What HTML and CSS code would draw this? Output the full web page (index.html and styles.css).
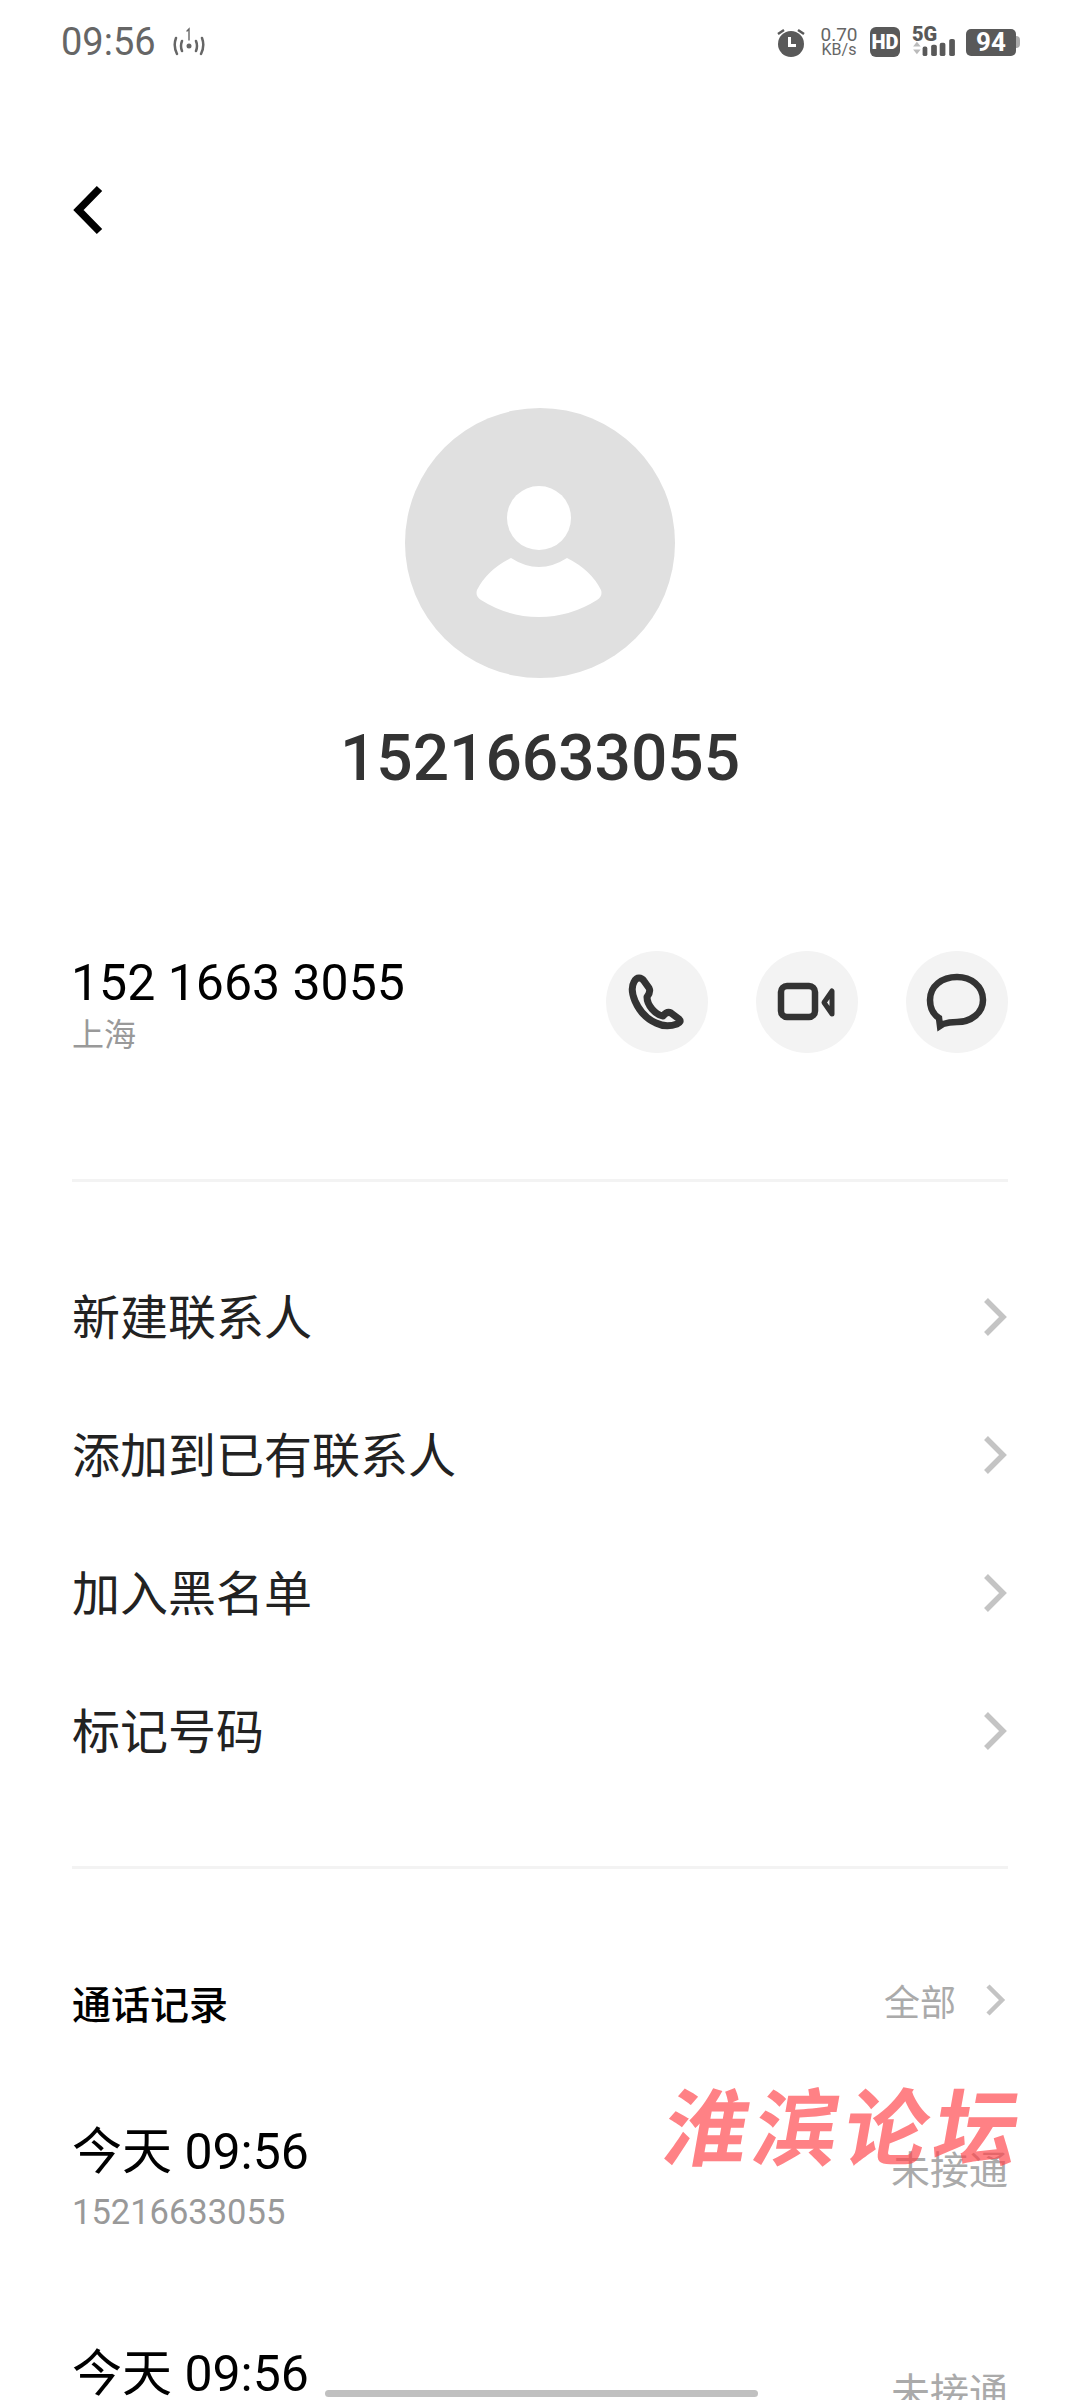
FILE: index.html
```html
<!DOCTYPE html>
<html lang="zh-CN">
<head>
    <meta charset="UTF-8">
    <meta name="viewport" content="width=device-width, initial-scale=1.0">
    <title>通话详情</title>
    <link rel="stylesheet" href="styles.css">
</head>
<body>
    <div class="statusbar">
        <div class="status-left">
            <span class="time">09:56</span>
            <svg class="hotspot" width="32" height="30" viewBox="0 0 32 30" fill="none" stroke="#666" stroke-width="2.500" stroke-linecap="round">
                <path d="M3 11q-3 8 1 16M9 14q-2 5 0 10M29 11q3 8-1 16M23 14q2 5 0 10"/>
                <circle cx="16" cy="19" r="2.500" fill="#666" stroke="none"/>
                <path d="M14 4l2-2v11" stroke-width="1.400"/>
            </svg>
        </div>
        <div class="status-right">
            <svg class="alarm" width="30" height="30" viewBox="0 0 30 30">
                <circle cx="15" cy="17" r="13" fill="#595959"/>
                <path d="M2 7l6-4M28 7l-6-4" stroke="#595959" stroke-width="2.500" fill="none"/>
                <path d="M13.500 10v8.500h6.500" stroke="#fff" stroke-width="3" fill="none"/>
            </svg>
            <div class="speed"><span>0.70</span><span>KB/s</span></div>
            <div class="hd">HD</div>
            <div class="net">
                <span class="net-label">5G</span>
                <svg class="signal" width="44" height="20" viewBox="0 0 44 20" fill="#595959">
                    <path d="M0 9l4-5 4 5zM0 12h8l-4 5z" fill="#bbb"/>
                    <rect x="10" y="9" width="5" height="10" rx="2"/>
                    <rect x="19" y="7" width="6" height="12" rx="2"/>
                    <rect x="28" y="5" width="6" height="14" rx="2"/>
                    <rect x="38" y="1" width="6" height="18" rx="2"/>
                </svg>
            </div>
            <div class="battery"><span class="battery-body">94</span><span class="battery-cap"></span></div>
        </div>
    </div>

    <div class="topbar">
        <svg width="34" height="50" viewBox="0 0 34 50" fill="none" stroke="#000" stroke-width="7.500">
            <path d="M30.500 3.500L9.500 25 30.500 46.500"/>
        </svg>
    </div>

    <div class="profile">
        <div class="avatar">
            <svg width="270" height="270" viewBox="0 0 270 270" fill="#fff">
                <circle cx="134" cy="110" r="32"/>
                <path d="M106 150Q134 168 162 150Q186 162 196 182Q198 188 192 192Q165 209 134 209Q103 209 76 192Q70 188 72 182Q82 162 106 150Z"/>
            </svg>
        </div>
        <div class="name">15216633055</div>
    </div>

    <div class="contact">
        <div class="contact-info">
            <div class="phone">152 1663 3055</div>
            <div class="region">上海</div>
        </div>
        <div class="actions">
            <div class="action">
                <svg width="102" height="102" viewBox="0 0 102 102" fill="none" stroke="#333" stroke-width="7" stroke-linejoin="round">
                    <path d="M33 27Q36 27 38 30L43 37Q45 41 41 46Q41 52 46 58Q51 64 57 65Q61 60 65 62L73 68Q76 71 71 73Q60 77 50 72Q36 66 29 50Q24 38 28 31Q30 27 33 27Z"/>
                </svg>
            </div>
            <div class="action">
                <svg width="102" height="102" viewBox="0 0 102 102" fill="none" stroke="#333" stroke-width="6.500" stroke-linejoin="round">
                    <rect x="25" y="35" width="34" height="31" rx="6"/>
                    <path d="M76 40v23l-8-11.500z" stroke-width="5"/>
                </svg>
            </div>
            <div class="action">
                <svg width="102" height="102" viewBox="0 0 102 102" fill="none" stroke="#333" stroke-width="6.500">
                    <path d="M33 67C25 62 24 55 24 49C24 35 36 26 51 26C65 26 77 35 77 49C77 62 65 71 51 71C47 71 43 71 37 73L34 75Z"/>
                </svg>
            </div>
        </div>
    </div>

    <ul class="menu">
        <li class="menu-item">新建联系人<svg class="arrow" width="26" height="40" viewBox="0 0 26 40" fill="none" stroke="#c4c4c4" stroke-width="5.500"><path d="M4 3l17 17L4 37"/></svg></li>
        <li class="menu-item">添加到已有联系人<svg class="arrow" width="26" height="40" viewBox="0 0 26 40" fill="none" stroke="#c4c4c4" stroke-width="5.500"><path d="M4 3l17 17L4 37"/></svg></li>
        <li class="menu-item">加入黑名单<svg class="arrow" width="26" height="40" viewBox="0 0 26 40" fill="none" stroke="#c4c4c4" stroke-width="5.500"><path d="M4 3l17 17L4 37"/></svg></li>
        <li class="menu-item">标记号码<svg class="arrow" width="26" height="40" viewBox="0 0 26 40" fill="none" stroke="#c4c4c4" stroke-width="5.500"><path d="M4 3l17 17L4 37"/></svg></li>
    </ul>

    <div class="history">
        <div class="history-head">
            <span class="history-title">通话记录</span>
            <span class="history-all">全部<svg width="24" height="34" viewBox="0 0 24 34" fill="none" stroke="#c4c4c4" stroke-width="4.500"><path d="M4 3l14 14L4 31"/></svg></span>
        </div>
        <div class="call">
            <div>
                <div class="call-time">今天 09:56</div>
                <div class="call-num">15216633055</div>
            </div>
            <span class="call-state">未接通</span>
        </div>
        <div class="call">
            <div>
                <div class="call-time">今天 09:56</div>
            </div>
            <span class="call-state">未接通</span>
        </div>
    </div>

    <div class="watermark">淮滨论坛</div>
    <div class="home-bar"></div>
</body>
</html>
```

FILE: styles.css
```css
*{
    padding: 0;
    margin: 0;
    box-sizing: border-box;
}
ul li{
    list-style: none;
}
body{
    position: relative;
    width: 1080px;
    height: 2400px;
    overflow: hidden;
    background-color: #fff;
    color: #000;
    font-family: Roboto, "Noto Sans CJK SC", sans-serif;
}

/* status bar */
.statusbar{
    display: flex;
    justify-content: space-between;
    align-items: center;
    height: 84px;
    padding: 0 60px 0 61px;
    color: #666;
}
.status-left{
    display: flex;
    align-items: center;
    gap: 17px;
}
.time{
    font-size: 38px;
    line-height: 44px;
}
.status-right{
    display: flex;
    align-items: center;
    height: 30px;
}
.alarm{
    margin-right: 14px;
}
.speed{
    display: flex;
    flex-direction: column;
    align-items: center;
    width: 38px;
    margin-right: 12px;
    font-size: 16px;
    line-height: 15px;
}
.speed span:first-child{
    font-size: 19px;
}
.hd{
    width: 30px;
    height: 30px;
    margin-right: 12px;
    border-radius: 6px;
    background-color: #595959;
    color: #fff;
    font-size: 20px;
    font-weight: 900;
    line-height: 30px;
    text-align: center;
}
.net{
    display: flex;
    flex-direction: column;
    width: 44px;
    height: 30px;
    margin-right: 10px;
}
.net-label{
    height: 14px;
    color: #595959;
    font-size: 20px;
    font-weight: 900;
    line-height: 14px;
}
.signal{
    margin-top: -3px;
}
.battery{
    display: flex;
    align-items: center;
}
.battery-body{
    width: 50px;
    height: 27px;
    border-radius: 5px;
    background-color: #595959;
    color: #fff;
    font-size: 26px;
    font-weight: 700;
    line-height: 27px;
    text-align: center;
}
.battery-cap{
    width: 4px;
    height: 12px;
    border-radius: 0 4px 4px 0;
    background-color: #aaa;
}

/* back */
.topbar{
    display: flex;
    padding: 101px 0 0 69px;
}

/* avatar and name */
.profile{
    display: flex;
    flex-direction: column;
    align-items: center;
    margin-top: 173px;
}
.avatar{
    width: 270px;
    height: 270px;
    border-radius: 50%;
    background-color: #e0e0e0;
}
.name{
    margin-top: 43px;
    color: #333;
    font-size: 64px;
    font-weight: 500;
    line-height: 76px;
}

/* number and actions */
.contact{
    display: flex;
    justify-content: space-between;
    align-items: flex-start;
    margin: 156px 72px 0;
    padding-bottom: 122px;
    border-bottom: 3px solid #f3f3f3;
}
.phone{
    margin-left: -1px;
    font-size: 50px;
    line-height: 60px;
}
.region{
    color: #999;
    font-size: 32px;
    line-height: 44px;
}
.actions{
    display: flex;
    gap: 48px;
    margin-top: -2px;
}
.action{
    width: 102px;
    height: 102px;
    border-radius: 50%;
    background-color: #f3f3f3;
}

/* menu */
.menu{
    margin: 63px 72px 0;
    padding-bottom: 69px;
    border-bottom: 3px solid #f3f3f3;
}
.menu-item{
    display: flex;
    justify-content: space-between;
    align-items: center;
    height: 138px;
    color: #222;
    font-size: 48px;
}
.arrow{
    margin-top: 6px;
}

/* call history */
.history{
    padding: 0 72px;
}
.history-head{
    display: flex;
    justify-content: space-between;
    align-items: center;
    height: 50px;
    margin-top: 108px;
}
.history-title{
    font-size: 39px;
    font-weight: 500;
}
.history-all{
    display: flex;
    align-items: center;
    gap: 28px;
    margin-top: -4px;
    color: #aaa;
    font-size: 36px;
}
.call{
    display: flex;
    justify-content: space-between;
    align-items: flex-start;
    height: 222px;
    padding-top: 95px;
}
.call-time{
    font-size: 50px;
    line-height: 60px;
}
.call-num{
    margin-top: 5px;
    color: #999;
    font-size: 34.500px;
    line-height: 50px;
}
.call-state{
    margin-top: 24px;
    color: #aaa;
    font-size: 39px;
    line-height: 50px;
}

/* overlays */
.watermark{
    position: absolute;
    left: 666px;
    top: 2068px;
    transform: skewX(-10deg);
    color: rgba(255, 70, 75, .68);
    font-family: "Noto Sans CJK SC", sans-serif;
    font-size: 84px;
    font-weight: 700;
    letter-spacing: 6px;
    line-height: 110px;
    white-space: nowrap;
}
.home-bar{
    position: absolute;
    left: 325px;
    top: 2390px;
    width: 433px;
    height: 7px;
    border-radius: 4px;
    background-color: #c0c0c0;
}
```
